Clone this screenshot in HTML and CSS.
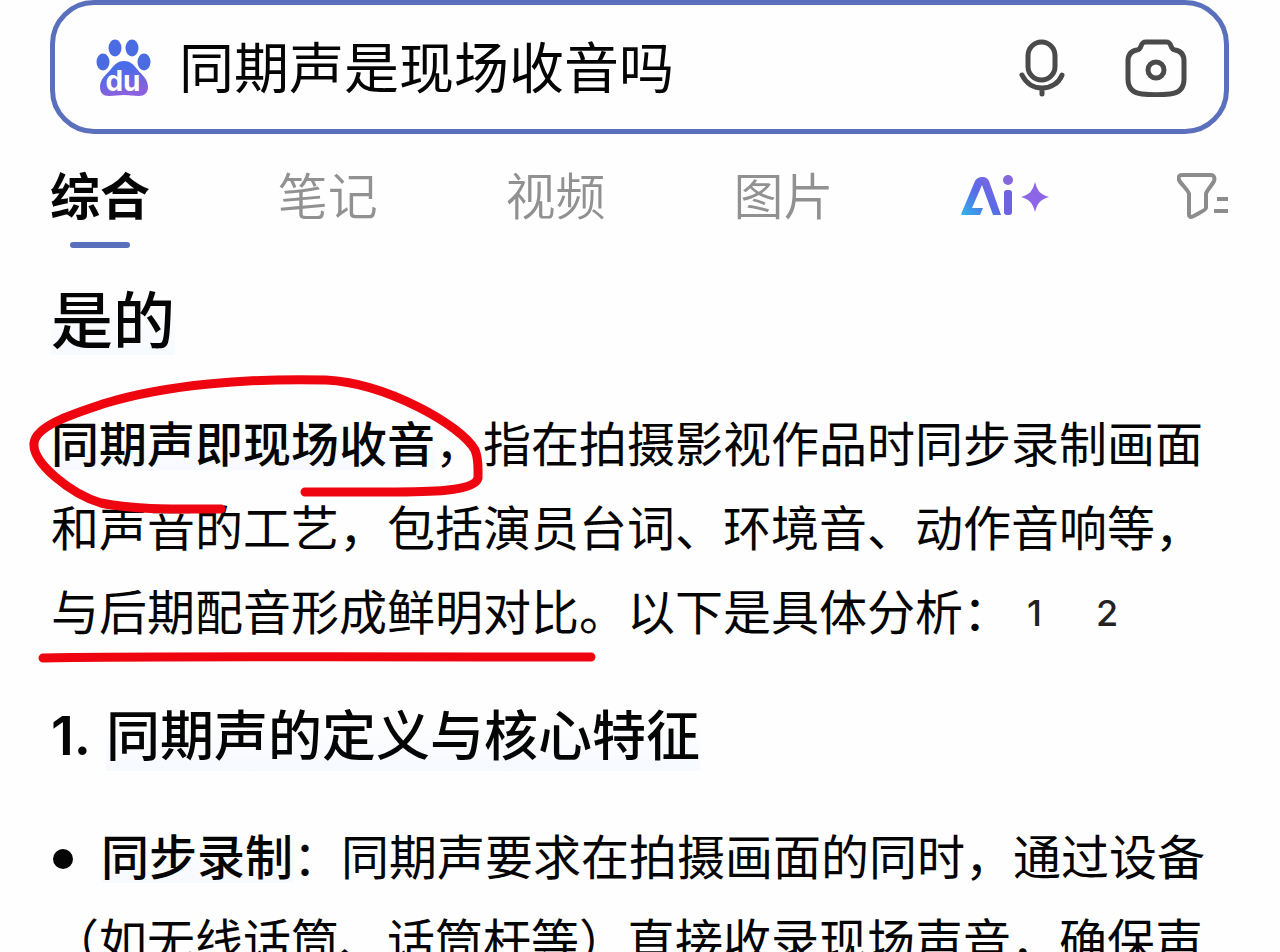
FILE: index.html
```
<!DOCTYPE html>
<html lang="zh-CN">
  <head>
    <meta charset="UTF-8" />
    <title>同期声是现场收音吗</title>
    <meta name="viewport" content="width=device-width, initial-scale=1" />
    <link rel="stylesheet" href="styles.css">
  </head>
  <body>
    <div class="page">
      <form class="search">
        <div class="logo">
          <svg class="paw" viewBox="0 0 56 60" aria-hidden="true">
            <defs>
              <linearGradient id="pawFill" x1="0" y1="0" x2="0.3" y2="1">
                <stop offset="0.3" stop-color="#4a6ce8" />
                <stop offset="1" stop-color="#8a60dc" />
              </linearGradient>
            </defs>
            <g fill="#4a6ce0">
              <ellipse cx="19" cy="11" rx="6.5" ry="8.5" />
              <ellipse cx="36" cy="11" rx="6.5" ry="8.5" />
              <ellipse cx="7" cy="25" rx="6.5" ry="8.5" />
              <ellipse cx="48" cy="25" rx="6.5" ry="8.5" />
            </g>
            <path fill="url(#pawFill)" d="M28 24c6 0 9 3 13 8 5 6 11 10 11 18 0 6-4 9-9 9-6 0-9-1-15-1s-9 1-15 1c-6 0-9-3-9-9 0-8 6-12 11-18 4-5 7-8 13-8z" />
          </svg>
          <span class="logo-text">du</span>
        </div>
        <input class="query" type="text" value="同期声是现场收音吗" aria-label="搜索" />
        <button class="icon-btn" type="button" aria-label="语音搜索">
          <svg width="46" height="60" viewBox="0 0 46 60">
            <rect x="9" y="5" width="27" height="38" rx="13.5" />
            <path d="M3 38c4 8 11 13 20 13s17-5 20-13M23 51v6" />
          </svg>
        </button>
        <button class="icon-btn" type="button" aria-label="拍照搜索">
          <svg width="62" height="60" viewBox="0 0 62 60">
            <path d="M21 5h20c3 0 4 1 5 4 1 3 2 4 4 4 6 1 9 5 9 11v18c0 9-5 14-14 15-9 1-19 1-28 0C8 56 3 51 3 42V24c0-6 3-10 9-11 2 0 3-1 4-4 1-3 2-4 5-4z" />
            <circle cx="31" cy="33" r="8" />
          </svg>
        </button>
      </form>

      <nav class="tabs">
        <a class="tab active" href="#all">综合</a>
        <a class="tab" href="#notes">笔记</a>
        <a class="tab" href="#video">视频</a>
        <a class="tab" href="#images">图片</a>
        <a class="tab ai" href="#ai" aria-label="Ai">
          <svg width="88" height="42" viewBox="0 0 88 42">
            <defs>
              <linearGradient id="aiFill" x1="0" y1="1" x2="1" y2="0">
                <stop offset="0" stop-color="#2db4e8" />
                <stop offset="0.5" stop-color="#5b6ae8" />
                <stop offset="1" stop-color="#8765e0" />
              </linearGradient>
            </defs>
            <path fill="url(#aiFill)" d="M1 40c-1 0-1-1 0-3L14 6c2-3 4-4 7-4h1c3 0 4 1 6 4l12 34h-8L21 10 11 33h11l-3 7z" />
            <rect x="43" y="15" width="8" height="25" rx="3" fill="#6d62e0" />
            <circle cx="47" cy="5" r="5" fill="#8468dc" />
            <path fill="#8d66e8" d="M74 7c3 10 5 12 14 15-9 3-11 5-14 15-3-10-5-12-14-15 9-3 11-5 14-15z" />
          </svg>
        </a>
        <button class="filter" type="button" aria-label="筛选">
          <svg width="52" height="48" viewBox="0 0 52 48">
            <path d="M5 3h29c3 0 4 3 3 6-1 3-8 10-8 13v14c0 2-14 9-15 9-1 0-2-1-2-2V22C12 19 4 12 2 8 1 5 2 3 5 3z" />
            <path d="M40 27h11M37 39h14" />
          </svg>
        </button>
      </nav>

      <main class="answer">
        <h1><span class="mark">是的</span></h1>
        <div class="summary">
          <p>
            <strong class="mark">同期声即现场收音</strong>，指在拍摄影视作品时同步录制画面和声音的工艺，包括演员台词、环境音、动作音响等，与后期配音形成鲜明对比。以下是具体分析：<a class="cite" href="#ref1">1</a><a class="cite" href="#ref2">2</a>
          </p>
          <!-- red pen marks -->
          <svg class="pen" width="600" height="300" viewBox="0 0 600 300" aria-hidden="true">
            <path d="M221 139C181 139 132 140 101 133C71 124 32 93 34 73C36 55 76 43 106 33C166 15 246 8 326 10C386 13 461 55 475 80C479 90 478 99 478 108C475 122 426 122 386 122L305 122" />
            <path d="M43 288C120 286 220 287 591 287" />
          </svg>
        </div>

        <h2><span class="num">1.</span><span class="mark">同期声的定义与核心特征</span></h2>
        <ul>
          <li><strong class="mark">同步录制</strong>：同期声要求在拍摄画面的同时，通过设备（如无线话筒、话筒杆等）直接收录现场声音，确保声</li>
        </ul>
      </main>
    </div>
  </body>
</html>
```

FILE: styles.css
```
:root {
  --blue: #5b70bd;
  --text: #050505;
  --muted: #919191;
  --red: #ee0510;
}
* {
  box-sizing: border-box;
}
body {
  margin: 0;
  background: #fefefe;
  color: var(--text);
  font-family: "Noto Sans CJK SC", sans-serif;
}
.page {
  height: 100vh;
  padding: 0 51px 0 50px;
  overflow: hidden;
}
button {
  padding: 0;
  border: none;
  background: none;
  cursor: pointer;
}
svg {
  display: block;
}

/* search bar */
.search {
  display: flex;
  align-items: center;
  height: 134px;
  padding: 0 37px 0 41px;
  border: 5px solid var(--blue);
  border-radius: 44px;
}
.logo {
  position: relative;
  width: 56px;
}
.logo-text {
  position: absolute;
  top: 30px;
  left: 0;
  width: 54px;
  text-align: center;
  color: #fff;
  font: 700 28px/28px Inter, sans-serif;
}
.query {
  flex: 1;
  min-width: 0;
  height: 90px;
  padding: 0 0 6px;
  margin-left: 27px;
  border: none;
  outline: none;
  background: transparent;
  color: var(--text);
  font-family: inherit;
  font-size: 55px;
}
.icon-btn {
  margin-left: 60px;
}
.icon-btn svg {
  fill: none;
  stroke: #4a4a4a;
  stroke-width: 5;
  stroke-linecap: round;
}

/* tabs */
.tabs {
  display: flex;
  justify-content: space-between;
  height: 114px;
}
.tab {
  display: flex;
  flex-direction: column;
  align-items: center;
  padding-top: 17px;
  color: var(--muted);
  font-size: 50px;
  font-weight: 350;
  line-height: 84px;
  text-decoration: none;
}
.tab.active {
  color: var(--text);
  font-weight: 700;
}
.tab.active::after {
  content: "";
  width: 60px;
  height: 6px;
  margin-top: 7px;
  border-radius: 3px;
  background: var(--blue);
}
.tab.ai {
  padding-top: 41px;
}
.filter {
  align-self: flex-start;
  padding-top: 38px;
}
.filter svg {
  fill: none;
  stroke: #8c8c8c;
  stroke-width: 4;
  stroke-linejoin: round;
}

/* answer */
.answer {
  padding: 27px 0 0 1px;
  font-size: 48px;
  line-height: 84px;
}
h1,
h2,
p,
ul {
  margin: 0;
  padding: 0;
}
h1 {
  margin-bottom: 40px;
  font-size: 62px;
  font-weight: 500;
}
h2 {
  display: flex;
  margin: 40px 0 34px;
  font-size: 54px;
  font-weight: 500;
}
.num {
  width: 55px;
  padding-top: 3px;
  font-family: Inter, sans-serif;
  font-weight: 600;
}
strong {
  font-weight: 500;
}
.mark {
  background: linear-gradient(transparent 35%, #f6f9fe 92%, transparent 92%);
}
.cite {
  display: inline-block;
  width: 69px;
  color: #222;
  font: 500 36px/48px Inter, sans-serif;
  text-align: left;
  text-indent: 16px;
  text-decoration: none;
  vertical-align: 4px;
}
.summary {
  position: relative;
}
.pen {
  position: absolute;
  top: -29px;
  left: -51px;
  fill: none;
  stroke: var(--red);
  stroke-width: 9;
  stroke-linecap: round;
  stroke-linejoin: round;
}
li {
  list-style: none;
}
li::before {
  content: "";
  display: inline-block;
  width: 20px;
  height: 20px;
  margin: 0 28px 6px 2px;
  border-radius: 50%;
  background: var(--text);
}
```
